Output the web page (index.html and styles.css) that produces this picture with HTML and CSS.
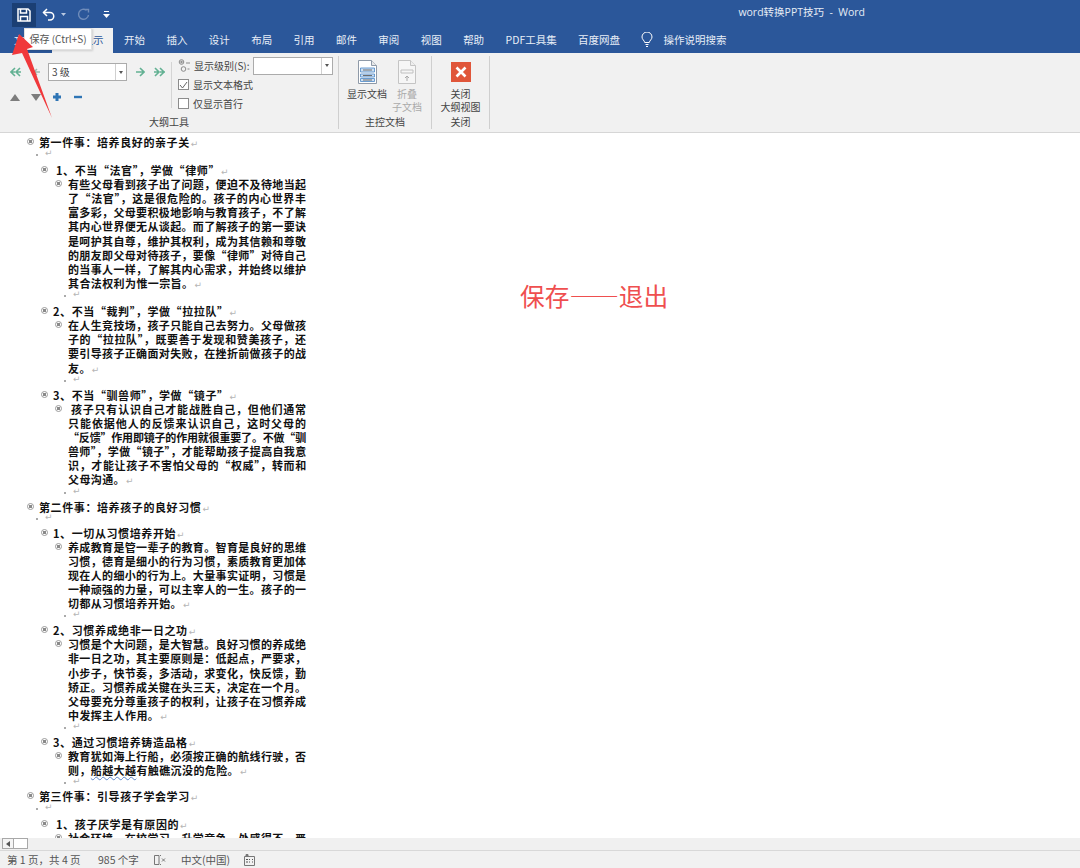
FILE: index.html
```html
<!DOCTYPE html>
<html lang="zh-CN">
<head>
  <meta charset="UTF-8" />
  <title>word转换PPT技巧 - Word</title>
  <link rel="stylesheet" href="styles.css">
</head>
<body>
<div class="app">
  <header class="titlebar">
    <div class="qat">
      <div class="save-btn">
        <svg width="14" height="14" viewBox="0 0 14 14" fill="none" stroke="#fff" stroke-width="1.5"><path d="M1 1h10l2 2v10H1z"/><path d="M3.500 1v4h6V1"/><path d="M3.500 13V8.500h7V13"/></svg>
      </div>
      <svg class="undo" width="13" height="13" viewBox="0 0 13 13" fill="none" stroke="#fff" stroke-width="1.5"><path d="M5 1L1.500 4.500 5 8"/><path d="M1.500 4.500H8a3.600 3.600 0 0 1 0 7.500H6"/></svg>
      <svg class="chev" width="5" height="4" viewBox="0 0 5 4"><path d="M0 0h5L2.500 3z" fill="#b9c9e2"/></svg>
      <svg class="redo" width="13" height="13" viewBox="0 0 13 13" fill="none" stroke="#6f8cba" stroke-width="1.4"><path d="M8.500 1.500h3v3"/><path d="M9.500 2.200A5 5 0 1 0 11.500 7"/></svg>
      <svg class="custom" width="7" height="7" viewBox="0 0 7 7"><path d="M1 0h5v1H1z" fill="#fff"/><path d="M0 3h7L3.500 7z" fill="#fff"/></svg>
      <div class="doc-title">word转换PPT技巧&nbsp; -&nbsp; Word</div>
    </div>
    <nav class="tabs">
      <span class="tab tab-file">文件</span>
      <span class="tab tab-active">大纲显示</span>
      <span class="tab">开始</span>
      <span class="tab">插入</span>
      <span class="tab">设计</span>
      <span class="tab">布局</span>
      <span class="tab">引用</span>
      <span class="tab">邮件</span>
      <span class="tab">审阅</span>
      <span class="tab">视图</span>
      <span class="tab">帮助</span>
      <span class="tab">PDF工具集</span>
      <span class="tab">百度网盘</span>
      <svg class="bulb" width="12" height="15" viewBox="0 0 12 15" fill="none" stroke="#fff" stroke-width="1"><path d="M3.700 10.500C3.500 8.500 1 7.500 1 5a5 5 0 0 1 10 0c0 2.500-2.500 3.500-2.700 5.500z"/><path d="M4.500 12.500h3M5 14.500h2"/></svg>
      <span class="tab">操作说明搜索</span>
    </nav>
  </header>

  <section class="ribbon">
    <div class="group group-outline">
      <div class="group-body">
        <div class="nav">
          <div class="nav-row">
            <svg class="wide" width="12" height="10" viewBox="0 0 12 10" fill="none" stroke="#63b193" stroke-width="1.600"><path d="M5 1L1 5l4 4M1 5h4M10 1L6 5l4 4M6 5h5"/></svg>
            <svg width="7" height="10" viewBox="0 0 7 10" fill="none" stroke="#9fb8ae" stroke-width="1.500"><path d="M4 2L1 5l3 3M1 5h6"/></svg>
            <div class="combo combo-level"><span class="combo-val">3 级</span><span class="combo-btn"><i></i></span></div>
            <svg width="10" height="10" viewBox="0 0 10 10" fill="none" stroke="#63b193" stroke-width="1.600"><path d="M5 1l4 4-4 4M1 5h8"/></svg>
            <svg width="13" height="10" viewBox="0 0 13 10" fill="none" stroke="#63b193" stroke-width="1.600"><path d="M2 1l4 4-4 4M1 5h5M7 1l4 4-4 4M7 5h5"/></svg>
          </div>
          <div class="nav-row nav-row-small">
            <svg width="10" height="7" viewBox="0 0 10 7"><path d="M5 0l5 7H0z" fill="#7d7d7d"/></svg>
            <svg width="10" height="7" viewBox="0 0 10 7"><path d="M0 0h10L5 7z" fill="#7d7d7d"/></svg>
            <svg width="10" height="10" viewBox="0 0 10 10"><path d="M3.500 1h3v2.500H9v3H6.500V9h-3V6.500H1v-3h2.500z" fill="#2f75b5"/></svg>
            <svg width="10" height="10" viewBox="0 0 10 10"><path d="M1 3.800h8v2.400H1z" fill="#2f75b5"/></svg>
          </div>
        </div>
        <div class="opts">
          <div class="opt">
            <svg class="level-ico" width="13" height="13" viewBox="0 0 13 13" fill="none" stroke="#8a8a8a"><circle cx="3.500" cy="3" r="2.300"/><circle cx="3.500" cy="3" r=".8" fill="#8a8a8a"/><circle cx="5.500" cy="10" r="2.300"/><path d="M8 4h4M9.500 10h2"/></svg>
            <span class="opt-label">显示级别(S):</span>
            <div class="combo combo-show"><span class="combo-val"></span><span class="combo-btn"><i></i></span></div>
          </div>
          <div class="opt">
            <span class="check"><svg width="9" height="8" viewBox="0 0 9 8" fill="none" stroke="#666" stroke-width="1"><path d="M1 4l2.500 3L8 1"/></svg></span>
            <span>显示文本格式</span>
          </div>
          <div class="opt">
            <span class="check"></span>
            <span>仅显示首行</span>
          </div>
        </div>
      </div>
      <div class="group-label">大纲工具</div>
    </div>

    <div class="group group-master">
      <div class="group-body">
        <div class="big-btn">
          <svg width="19" height="24" viewBox="0 0 19 24"><path d="M.5.500h13l5 5v18H.5z" fill="#fff" stroke="#8f9aa8"/><path d="M13.500.500v5h5" fill="#e8e8e8" stroke="#8f9aa8"/><path d="M2.500 8h14v4h-14zM2.500 14h14v3h-14zM2.500 18.500h14v3h-14z" fill="#cfe0f2" stroke="#4a86c5" stroke-width=".8"/><path d="M5 10h9M5 15.500h9M5 20h9" stroke="#6d6d6d"/></svg>
          <span class="big-text">显示文档</span>
        </div>
        <div class="big-btn big-off">
          <svg width="18" height="24" viewBox="0 0 18 24"><path d="M.5.500h12l5 5v18H.5z" fill="#f6f6f6" stroke="#c4c4c4"/><path d="M12.500.500v5h5" fill="#eee" stroke="#c4c4c4"/><path d="M3 10h12v3H3z" fill="none" stroke="#c0c0c0"/><path d="M9 21v-4M7 18l2-2 2 2" fill="none" stroke="#aaa"/></svg>
          <span class="big-text">折叠<br>子文档</span>
        </div>
      </div>
      <div class="group-label">主控文档</div>
    </div>

    <div class="group group-close">
      <div class="group-body">
        <div class="big-btn">
          <div class="close-ico"><svg width="12" height="12" viewBox="0 0 12 12" stroke="#fff" stroke-width="2.600"><path d="M1.500 1.500l9 9M10.500 1.500l-9 9"/></svg></div>
          <span class="big-text">关闭<br>大纲视图</span>
        </div>
      </div>
      <div class="group-label">关闭</div>
    </div>
  </section>

  <main class="doc">
    <div class="note">保存——退出</div>

    <div class="row lv1"><i class="bul"></i><div class="txt">第一件事&#xFF1A;培养良好的亲子关<b class="ret">↵</b></div></div>
    <div class="row lv1-blank"><i class="dot"></i><b class="ret">↵</b></div>
    <div class="row lv2"><i class="bul"></i><div class="txt shift">1、不当“法官”&#xFF0C;学做“律师”<b class="ret">↵</b></div></div>
    <div class="row lv3"><i class="bul"></i><div class="para">
      <span>有些父母看到孩子出了问题&#xFF0C;便迫不及待地当起</span>
      <span>了“法官”&#xFF0C;这是很危险的。孩子的内心世界丰</span>
      <span>富多彩&#xFF0C;父母要积极地影响与教育孩子&#xFF0C;不了解</span>
      <span>其内心世界便无从谈起。而了解孩子的第一要诀</span>
      <span>是呵护其自尊&#xFF0C;维护其权利&#xFF0C;成为其信赖和尊敬</span>
      <span>的朋友即父母对待孩子&#xFF0C;要像“律师”对待自己</span>
      <span>的当事人一样&#xFF0C;了解其内心需求&#xFF0C;并始终以维护</span>
      <span class="end">其合法权利为惟一宗旨。<b class="ret">↵</b></span>
    </div></div>
    <div class="row lv2-blank"><i class="dot"></i><b class="ret">↵</b></div>

    <div class="row lv2"><i class="bul"></i><div class="txt">2、不当“裁判”&#xFF0C;学做“拉拉队”<b class="ret">↵</b></div></div>
    <div class="row lv3"><i class="bul"></i><div class="para">
      <span>在人生竞技场&#xFF0C;孩子只能自己去努力。父母做孩</span>
      <span>子的“拉拉队”&#xFF0C;既要善于发现和赞美孩子&#xFF0C;还</span>
      <span>要引导孩子正确面对失败&#xFF0C;在挫折前做孩子的战</span>
      <span class="end">友。<b class="ret">↵</b></span>
    </div></div>
    <div class="row lv2-blank tight"><i class="dot"></i><b class="ret">↵</b></div>

    <div class="row lv2"><i class="bul"></i><div class="txt">3、不当“驯兽师”&#xFF0C;学做“镜子”<b class="ret">↵</b></div></div>
    <div class="row lv3"><i class="bul"></i><div class="para">
      <span class="indent">孩子只有认识自己才能战胜自己&#xFF0C;但他们通常</span>
      <span>只能依据他人的反馈来认识自己&#xFF0C;这时父母的</span>
      <span class="fit">“反馈”作用即镜子的作用就很重要了。不做“驯</span>
      <span class="fit">兽师”&#xFF0C;学做“镜子”&#xFF0C;才能帮助孩子提高自我意</span>
      <span class="fit">识&#xFF0C;才能让孩子不害怕父母的“权威”&#xFF0C;转而和</span>
      <span class="end">父母沟通。<b class="ret">↵</b></span>
    </div></div>
    <div class="row lv2-blank tight"><i class="dot"></i><b class="ret">↵</b></div>

    <div class="row lv1 tight"><i class="bul"></i><div class="txt">第二件事&#xFF1A;培养孩子的良好习惯<b class="ret">↵</b></div></div>
    <div class="row lv1-blank tight"><i class="dot"></i><b class="ret">↵</b></div>
    <div class="row lv2"><i class="bul"></i><div class="txt">1、一切从习惯培养开始<b class="ret">↵</b></div></div>
    <div class="row lv3"><i class="bul"></i><div class="para">
      <span>养成教育是管一辈子的教育。智育是良好的思维</span>
      <span>习惯&#xFF0C;德育是细小的行为习惯&#xFF0C;素质教育更加体</span>
      <span>现在人的细小的行为上。大量事实证明&#xFF0C;习惯是</span>
      <span>一种顽强的力量&#xFF0C;可以主宰人的一生。孩子的一</span>
      <span class="end">切都从习惯培养开始。<b class="ret">↵</b></span>
    </div></div>
    <div class="row lv2-blank tight"><i class="dot"></i><b class="ret">↵</b></div>

    <div class="row lv2"><i class="bul"></i><div class="txt">2、习惯养成绝非一日之功<b class="ret">↵</b></div></div>
    <div class="row lv3"><i class="bul"></i><div class="para">
      <span>习惯是个大问题&#xFF0C;是大智慧。良好习惯的养成绝</span>
      <span>非一日之功&#xFF0C;其主要原则是&#xFF1A;低起点&#xFF0C;严要求&#xFF0C;</span>
      <span>小步子&#xFF0C;快节奏&#xFF0C;多活动&#xFF0C;求变化&#xFF0C;快反馈&#xFF0C;勤</span>
      <span>矫正。习惯养成关键在头三天&#xFF0C;决定在一个月。</span>
      <span>父母要充分尊重孩子的权利&#xFF0C;让孩子在习惯养成</span>
      <span class="end">中发挥主人作用。<b class="ret">↵</b></span>
    </div></div>
    <div class="row lv2-blank tight"><i class="dot"></i><b class="ret">↵</b></div>

    <div class="row lv2"><i class="bul"></i><div class="txt">3、通过习惯培养铸造品格<b class="ret">↵</b></div></div>
    <div class="row lv3"><i class="bul"></i><div class="para">
      <span>教育犹如海上行船&#xFF0C;必须按正确的航线行驶&#xFF0C;否</span>
      <span class="end">则&#xFF0C;<u class="typo">船越大越</u>有触礁沉没的危险。<b class="ret">↵</b></span>
    </div></div>
    <div class="row lv2-blank tighter"><i class="dot"></i><b class="ret">↵</b></div>

    <div class="row lv1"><i class="bul"></i><div class="txt">第三件事&#xFF1A;引导孩子学会学习<b class="ret">↵</b></div></div>
    <div class="row lv1-blank"><i class="dot"></i><b class="ret">↵</b></div>
    <div class="row lv2"><i class="bul"></i><div class="txt shift">1、孩子厌学是有原因的<b class="ret">↵</b></div></div>
    <div class="row lv3"><i class="bul"></i><div class="para">
      <span>社会环境、在校学习、升学竞争、处感得不、严</span>
    </div></div>
  </main>

  <div class="hscroll">
    <span class="scroll-left"><svg width="4" height="6" viewBox="0 0 4 6"><path d="M4 0v6L0 3z" fill="#555"/></svg></span>
    <span class="scroll-thumb"></span>
  </div>

  <footer class="statusbar">
    <span class="st-page">第 1 页&#xFF0C;共 4 页</span>
    <span class="st-words">985 个字</span>
    <svg class="st-ico" width="12" height="12" viewBox="0 0 12 12" fill="none" stroke="#777"><path d="M.5 1.500h4.500v9H.5zM6 1.500h1M6 10.500h1"/><path d="M8 4.500l3 3M11 4.500l-3 3"/></svg>
    <span class="st-lang">中文(中国)</span>
    <svg class="st-ico" width="11" height="12" viewBox="0 0 11 12" fill="none" stroke="#777"><path d="M.5 2.500h10v9H.5z"/><path d="M2 5.500h2M5 5.500h1M8 5.500h1M2 8h2M5 8h1M8 8h1" stroke="#555"/><path d="M2 .5h2v2H2z" fill="#777"/></svg>
  </footer>

  <div class="tooltip">保存 (Ctrl+S)</div>
  <svg class="pointer" width="60" height="125" viewBox="0 0 60 125"><path d="M19 34L33 47 27 49 52 118 22 53 12 55z" fill="#f0383b"/></svg>
</div>
</body>
</html>
```

FILE: styles.css
```css
* {
  box-sizing: border-box;
}

body {
  margin: 0;
  font-family: "Noto Sans CJK SC", "Liberation Sans", sans-serif;
  background: #fff;
}

.app {
  position: relative;
  display: flex;
  flex-direction: column;
  width: 1080px;
  height: 868px;
  overflow: hidden;
}

/* title bar */
.titlebar {
  height: 53px;
  background: #2b579a;
  color: #fff;
  flex: none;
}

.qat {
  display: flex;
  align-items: center;
  height: 28px;
  padding: 1px 0 0 12px;
}

.save-btn {
  display: flex;
  align-items: center;
  justify-content: center;
  width: 24px;
  height: 24px;
  background: #1b3f74;
}

.undo {
  margin-left: 6px;
}

.chev {
  margin-left: 6px;
}

.redo {
  margin-left: 11px;
}

.custom {
  margin-left: 13px;
}

.doc-title {
  margin-left: auto;
  margin-right: 215px;
  margin-top: -5px;
  font-family: "Open Sans", "Noto Sans CJK SC", sans-serif;
  font-size: 10.5px;
  line-height: 14px;
  color: #e6ecf5;
}

.tabs {
  display: flex;
  align-items: flex-start;
  height: 25px;
  padding-left: 14px;
  font-size: 10.5px;
  line-height: 23px;
}

.tab {
  margin-right: 21.4px;
  color: #e8eef7;
  white-space: nowrap;
}

.tab-file {
  margin-right: 17px;
}

.tab-active {
  width: 61px;
  height: 25px;
  margin-right: 11px;
  background: #f1f1f1;
  color: #2b579a;
  text-align: center;
}

.bulb {
  margin: 4px 10px 0 0;
}

/* ribbon */
.ribbon {
  display: flex;
  align-items: flex-start;
  height: 79px;
  background: #f1f1f1;
  flex: none;
  font-size: 10px;
  color: #444;
}

.group {
  display: flex;
  flex-direction: column;
  height: 73px;
  margin-top: 3px;
  border-right: 1px solid #cfcfcf;
  flex: none;
}

.group-outline {
  width: 339px;
}

.group-master {
  width: 93px;
}

.group-close {
  width: 58px;
}

.group-body {
  display: flex;
  height: 58px;
}

.group-label {
  height: 15px;
  line-height: 15px;
  text-align: center;
  font-size: 10px;
}

.nav {
  width: 172px;
  height: 46px;
  margin-top: 6px;
  padding: 1px 0 0 10px;
  border-right: 1px solid #d4d4d4;
}

.nav-row {
  display: flex;
  align-items: center;
  gap: 8px;
  height: 18px;
}

.nav-row .wide {
  margin-right: 3px;
}

.nav-row-small {
  gap: 11px;
  height: 16px;
  margin-top: 8px;
}

.combo {
  display: flex;
  height: 18px;
  background: #fff;
  border: 1px solid #ababab;
}

.combo-level {
  width: 79px;
}

.combo-show {
  width: 80px;
  margin-left: 3px;
}

.combo-val {
  flex: 1;
  padding-left: 3px;
  line-height: 16px;
}

.combo-btn {
  display: flex;
  align-items: center;
  justify-content: center;
  width: 11px;
  border-left: 1px solid #d0d0d0;
}

.combo-btn i {
  border-top: 3px solid #555;
  border-left: 2.5px solid transparent;
  border-right: 2.5px solid transparent;
}

.opts {
  margin-left: 6px;
}

.opt {
  display: flex;
  align-items: center;
  height: 19px;
}

.level-ico {
  margin-right: 3px;
}

.check {
  display: flex;
  align-items: center;
  justify-content: center;
  width: 11px;
  height: 11px;
  margin-right: 4px;
  background: #fff;
  border: 1px solid #8c8c8c;
}

.group-master .group-body {
  padding: 4px 0 0 8px;
}

.group-close .group-body {
  justify-content: center;
  padding-top: 6px;
}

.big-btn {
  display: flex;
  flex-direction: column;
  align-items: center;
  width: 40px;
}

.big-text {
  margin-top: 3px;
  font-size: 10px;
  line-height: 13px;
  text-align: center;
  white-space: nowrap;
}

.big-off .big-text {
  color: #aaa;
}

.close-ico {
  display: flex;
  align-items: center;
  justify-content: center;
  width: 20px;
  height: 20px;
  margin-bottom: 5px;
  background: #e0563a;
}

.close-ico + .big-text {
  margin-top: 0;
}

/* document */
.doc {
  position: relative;
  height: 706px;
  padding-top: 2px;
  background: #fff;
  border-top: 1px solid #d6d6d6;
  flex: none;
  overflow: hidden;
  font-size: 11px;
  font-weight: 700;
  color: #111;
}

.note {
  position: absolute;
  left: 520px;
  top: 144px;
  font-size: 24.7px;
  font-weight: 400;
  line-height: 36px;
  color: #ef4f4f;
  white-space: nowrap;
}

.row {
  display: flex;
  min-height: 14px;
  line-height: 14px;
}

.row.tight {
  min-height: 13px;
  height: 13px;
}

.row.tighter {
  min-height: 12px;
  height: 12px;
}

.lv1 {
  padding-left: 27px;
}

.lv2 {
  padding-left: 41px;
}

.lv3 {
  padding-left: 55px;
}

.lv1-blank {
  height: 14px;
  padding-left: 36px;
}

.lv2-blank {
  height: 14px;
  padding-left: 64px;
}

.row .txt {
  height: 14px;
  margin-left: 5px;
  letter-spacing: 0.6px;
  white-space: nowrap;
}

.row .shift {
  margin-left: 8px;
}

.bul {
  display: block;
  width: 7px;
  height: 7px;
  margin-top: 3px;
  border: 1px solid #9a9a9a;
  border-radius: 50%;
  background: radial-gradient(circle, #8a8a8a 0 1.500px, #fff 2px);
  flex: none;
}

.dot {
  display: block;
  width: 2px;
  height: 2px;
  margin: 5px 6px 0 0;
  background: #aaa;
  flex: none;
}

.ret {
  font-family: "DejaVu Sans", sans-serif;
  font-size: 9px;
  font-weight: 400;
  line-height: 1;
  color: #b5b5b5;
  margin-left: 1px;
}

.para {
  width: 244px;
  margin-left: 6px;
}

.para span {
  display: block;
  width: 238px;
  height: 14.15px;
  line-height: 14.15px;
  text-align: justify;
  text-align-last: justify;
  white-space: nowrap;
}

.para .end {
  text-align-last: left;
  letter-spacing: 0.4px;
}

.para .indent {
  padding-left: 3px;
}

.para .fit {
  letter-spacing: -0.2px;
}

.typo {
  text-decoration: underline wavy #5b84c8 1px;
  text-underline-offset: 1px;
}

/* bottom bars */
.hscroll {
  display: flex;
  align-items: flex-start;
  height: 13px;
  padding-left: 2px;
  background: #f0f0f0;
  border-bottom: 1px solid #d8d8d8;
  flex: none;
}

.scroll-left,
.scroll-thumb {
  display: flex;
  align-items: center;
  justify-content: center;
  height: 11px;
  background: #fff;
  border: 1px solid #a8a8a8;
}

.scroll-left {
  width: 12px;
  background: #f5f5f5;
}

.scroll-thumb {
  width: 15px;
  margin-left: -1px;
}

.statusbar {
  display: flex;
  align-items: center;
  height: 17px;
  padding-left: 7px;
  background: #f1f1f1;
  font-size: 10.5px;
  color: #555;
  flex: 1;
  white-space: nowrap;
}

.st-page {
  width: 91px;
}

.st-words {
  width: 56px;
}

.st-lang {
  width: 63px;
  margin-left: 15px;
}

/* overlays */
.tooltip {
  position: absolute;
  left: 24px;
  top: 28px;
  width: 68px;
  height: 22px;
  background: #fff;
  border: 1px solid #e2e2e2;
  box-shadow: 1px 1px 2px rgba(0, 0, 0, 0.15);
  font-size: 10px;
  line-height: 20px;
  color: #555;
  text-align: center;
  white-space: nowrap;
}

.pointer {
  position: absolute;
  left: 0;
  top: 0;
}
```
